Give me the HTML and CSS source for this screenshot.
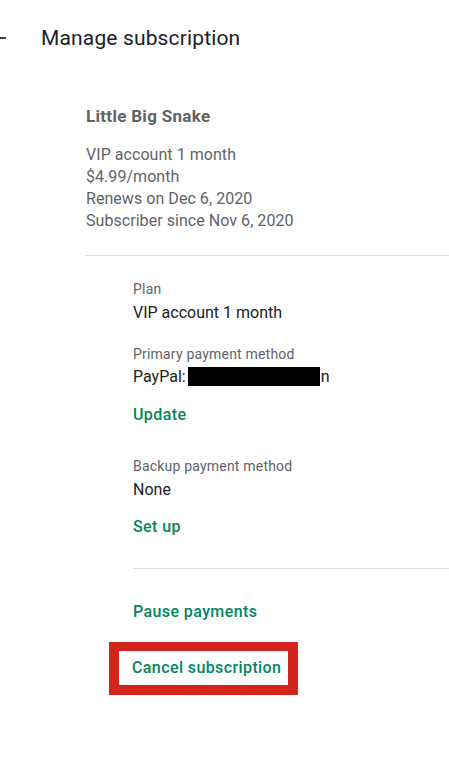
FILE: index.html
```html
<!DOCTYPE html>
<html lang="en">
<head>
<meta charset="utf-8">
<title>Manage subscription</title>
<link rel="stylesheet" href="styles.css">
</head>
<body>
<div class="page">
  <header class="header">
    <svg class="back" width="24" height="24" viewBox="0 0 24 24" aria-hidden="true"><path d="M20 11H7.83l5.59-5.59L12 4l-8 8 8 8 1.41-1.41L7.83 13H20v-2z" fill="#3c4043"/></svg>
    <h1 class="title">Manage subscription</h1>
  </header>
  <main class="content">
    <div class="app-name">Little Big Snake</div>
    <div class="details">
      <div>VIP account 1 month</div>
      <div>$4.99/month</div>
      <div>Renews on Dec 6, 2020</div>
      <div>Subscriber since Nov 6, 2020</div>
    </div>
    <hr class="divider">
    <section class="settings">
      <div class="label label-first">Plan</div>
      <div class="value">VIP account 1 month</div>
      <div class="label">Primary payment method</div>
      <div class="value value-pay">PayPal:<span class="redact"></span>n</div>
      <a class="link link-update" href="#">Update</a>
      <div class="label label-backup">Backup payment method</div>
      <div class="value">None</div>
      <a class="link link-setup" href="#">Set up</a>
      <hr class="divider divider-inner">
      <a class="link link-pause" href="#">Pause payments</a>
      <a class="link link-cancel" href="#">Cancel subscription</a>
    </section>
  </main>
</div>
</body>
</html>
```
FILE: styles.css
```css
html, body {
  margin: 0;
  padding: 0;
  background: #ffffff;
}
body {
  font-family: Roboto, "Noto Sans", "Liberation Sans", sans-serif;
  color: #202124;
  overflow: hidden;
}
.page {
  width: 449px;
  height: 782px;
}
.header {
  display: flex;
  align-items: center;
  height: 76px;
}
.back {
  flex: none;
  margin-left: -14px;
}
.title {
  margin: 0 0 0 31px;
  font-size: 21px;
  font-weight: 400;
  line-height: 28px;
  color: #202124;
  letter-spacing: 0.15px;
}
.content {
  padding-left: 86px;
}
.app-name {
  margin-top: 29px;
  font-size: 17px;
  line-height: 22px;
  font-weight: 700;
  color: #5f6368;
  letter-spacing: 0.3px;
}
.details {
  margin-top: 17px;
  font-size: 16px;
  line-height: 22px;
  color: #5f6368;
  letter-spacing: 0.05px;
}
.divider {
  margin: 23px 0 0 -1px;
  border: 0;
  height: 1px;
  background: #e0e0e0;
}
.settings {
  padding-left: 47px;
  display: flex;
  flex-direction: column;
  align-items: flex-start;
}
.label {
  margin-top: 20px;
  font-size: 14px;
  line-height: 20px;
  color: #5f6368;
  letter-spacing: 0.2px;
}
.label-first { margin-top: 23px; }
.label-backup { margin-top: 30px; }
.value {
  margin-top: 3px;
  font-size: 16px;
  line-height: 22px;
  color: #202124;
}
.value-pay { margin-top: 2px; }
.redact {
  display: inline-block;
  width: 132px;
  height: 19px;
  margin: 1px 1px 0 2px;
  vertical-align: top;
  background: #000000;
}
.link {
  display: block;
  font-size: 16px;
  line-height: 22px;
  font-weight: 500;
  color: #01875f;
  text-decoration: none;
  letter-spacing: 0.4px;
}
.link-update { margin-top: 16px; }
.link-setup { margin-top: 15px; }
.divider-inner {
  align-self: stretch;
  margin: 30px 0 0 0;
}
.link-pause { margin-top: 32px; }
.link-cancel {
  margin: 19px 0 0 -24px;
  padding: 6px 7px 6px 13px;
  border: 10px solid #d2231c;
  border-top-width: 9px;
}
```
